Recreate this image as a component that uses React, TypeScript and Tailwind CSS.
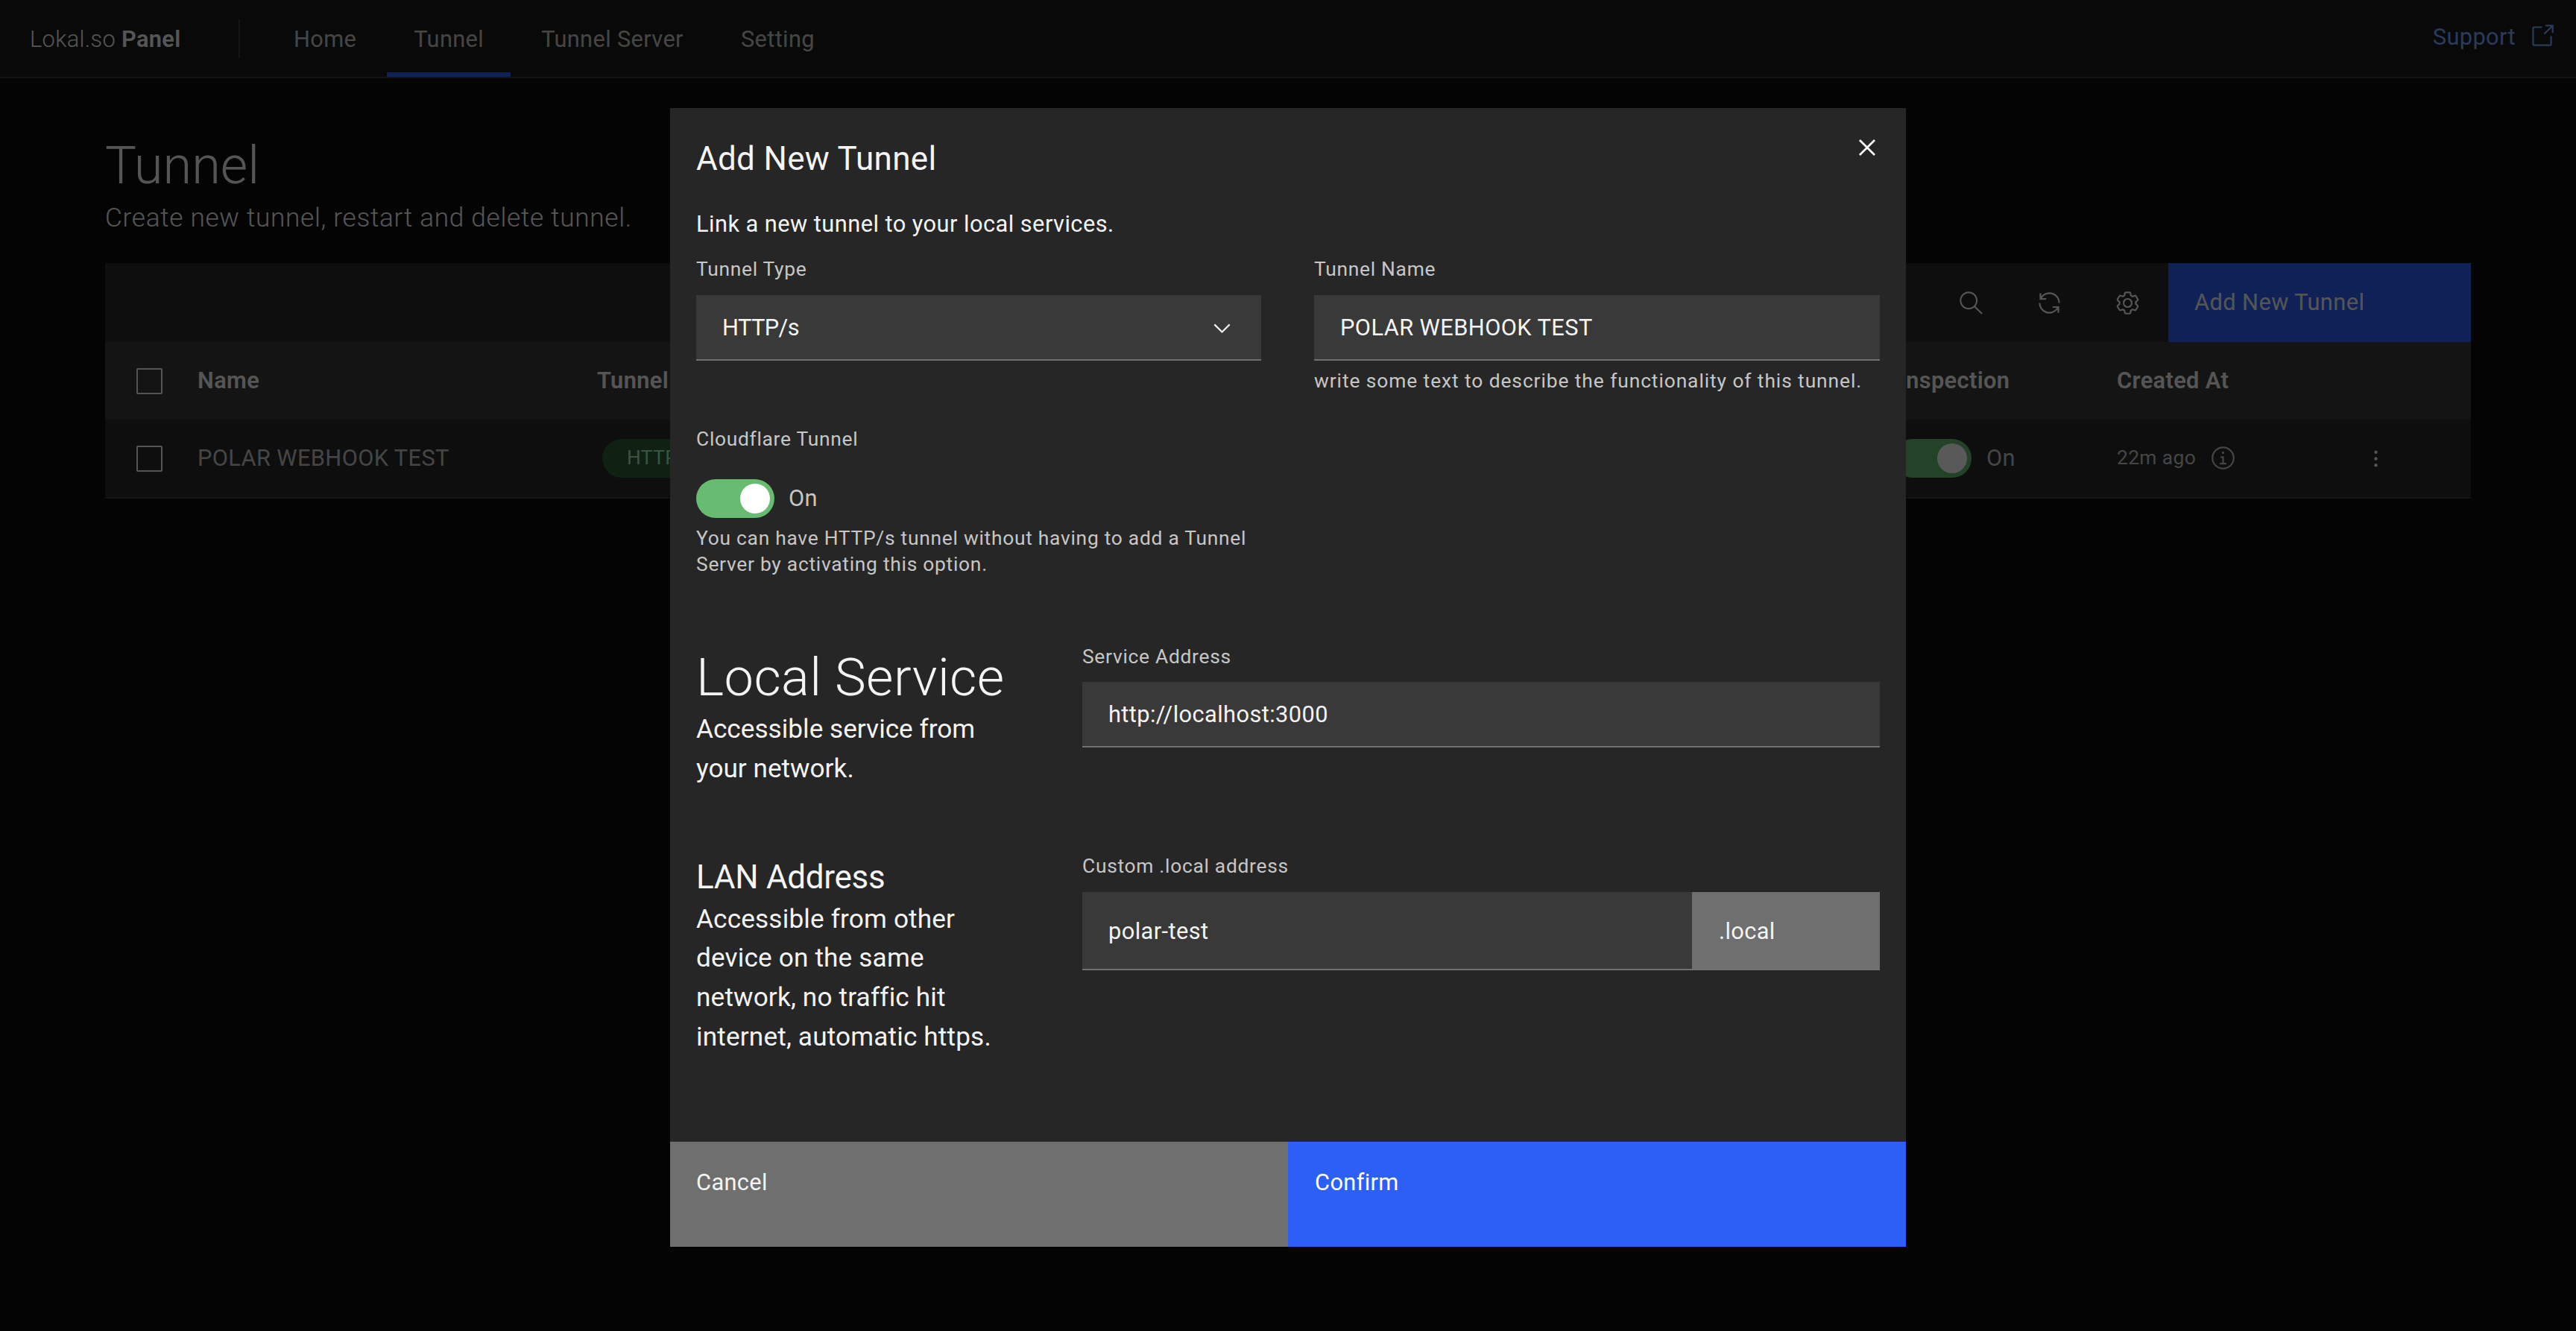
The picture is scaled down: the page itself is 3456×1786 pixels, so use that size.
import React from "react";

const Search = () => (
  <svg viewBox="0 0 16 16" className="w-[35px] h-[35px]" fill="currentColor">
    <path d="M15,14.3L10.7,10c1.9-2.3,1.6-5.8-0.7-7.7S4.2,0.7,2.3,3S0.7,8.8,3,10.7c2,1.7,5,1.7,7,0l4.3,4.3L15,14.3z M2,6.5 C2,4,4,2,6.5,2S11,4,11,6.5S9,11,6.5,11S2,9,2,6.5z" />
  </svg>
);
const Renew = () => (
  <svg viewBox="0 0 32 32" className="w-[35px] h-[35px]" fill="currentColor">
    <path d="M12 10H6.78A11 11 0 0 1 27 16h2A13 13 0 0 0 6 7.68V4H4v8h8zM20 22h5.22A11 11 0 0 1 5 16H3a13 13 0 0 0 23 8.32V28h2v-8h-8z" />
  </svg>
);
const Gear = () => (
  <svg viewBox="0 0 32 32" className="w-[35px] h-[35px]" fill="currentColor">
    <path d="M27,16.76c0-.25,0-.5,0-.76s0-.51,0-.77l1.92-1.68A2,2,0,0,0,29.3,11L26.94,7a2,2,0,0,0-1.73-1,2,2,0,0,0-.64.1l-2.43.82a11.35,11.35,0,0,0-1.31-.75l-.51-2.52a2,2,0,0,0-2-1.61H13.64a2,2,0,0,0-2,1.61l-.51,2.52a11.48,11.48,0,0,0-1.32.75L7.43,6.06A2,2,0,0,0,6.79,6,2,2,0,0,0,5.06,7L2.7,11a2,2,0,0,0,.41,2.51L5,15.24c0,.25,0,.5,0,.76s0,.51,0,.77L3.11,18.45A2,2,0,0,0,2.7,21L5.06,25a2,2,0,0,0,1.73,1,2,2,0,0,0,.64-.1l2.43-.82a11.35,11.35,0,0,0,1.31.75l.51,2.52a2,2,0,0,0,2,1.61h4.72a2,2,0,0,0,2-1.61l.51-2.52a11.48,11.48,0,0,0,1.32-.75l2.42.82a2,2,0,0,0,.64.1,2,2,0,0,0,1.73-1L29.3,21a2,2,0,0,0-.41-2.51ZM25.21,24l-3.43-1.16a8.86,8.86,0,0,1-2.71,1.57L18.36,28H13.64l-.71-3.55a9.36,9.36,0,0,1-2.7-1.57L6.79,24,4.43,20l2.72-2.4a8.9,8.9,0,0,1,0-3.13L4.43,12,6.79,8l3.43,1.16a8.86,8.86,0,0,1,2.71-1.57L13.64,4h4.72l.71,3.55a9.36,9.36,0,0,1,2.7,1.57L25.21,8,27.57,12l-2.72,2.4a8.9,8.9,0,0,1,0,3.13L27.57,20Z" />
    <path d="M16,22a6,6,0,1,1,6-6A5.94,5.94,0,0,1,16,22Zm0-10a3.91,3.91,0,0,0-4,4,3.91,3.91,0,0,0,4,4,3.91,3.91,0,0,0,4-4A3.91,3.91,0,0,0,16,12Z" />
  </svg>
);
const Launch = () => (
  <svg viewBox="0 0 16 16" className="w-[35px] h-[35px]" fill="currentColor">
    <path d="M13,14H3c-0.6,0-1-0.4-1-1V3c0-0.6,0.4-1,1-1h5v1H3v10h10V8h1v5C14,13.6,13.6,14,13,14z" />
    <path d="M10 1L10 2 13.3 2 9 6.3 9.7 7 14 2.7 14 6 15 6 15 1z" />
  </svg>
);
const Info = () => (
  <svg viewBox="0 0 32 32" className="w-[35px] h-[35px]" fill="currentColor">
    <path d="M17 22L17 14 13 14 13 16 15 16 15 22 12 22 12 24 20 24 20 22 17 22zM16 8a1.5 1.5 0 1 0 1.5 1.5A1.5 1.5 0 0 0 16 8z" />
    <path d="M16,30A14,14,0,1,1,30,16,14,14,0,0,1,16,30ZM16,4A12,12,0,1,0,28,16,12,12,0,0,0,16,4Z" />
  </svg>
);
const Kebab = () => (
  <svg viewBox="0 0 32 32" className="w-[35px] h-[35px]" fill="currentColor">
    <circle cx="16" cy="8" r="2" />
    <circle cx="16" cy="16" r="2" />
    <circle cx="16" cy="24" r="2" />
  </svg>
);
const Close = () => (
  <svg viewBox="0 0 32 32" className="w-[44px] h-[44px]" fill="currentColor">
    <path d="M24 9.4L22.6 8 16 14.6 9.4 8 8 9.4 14.6 16 8 22.6 9.4 24 16 17.4 22.6 24 24 22.6 17.4 16 24 9.4z" />
  </svg>
);
const Chevron = () => (
  <svg viewBox="0 0 16 16" className="w-[35px] h-[35px]" fill="currentColor">
    <path d="M8 11L3 6 3.7 5.3 8 9.6 12.3 5.3 13 6z" />
  </svg>
);

const Checkbox = () => <div className="w-[35px] h-[35px] rounded-[2px] border-2 border-[#f4f4f4]" />;

const Label = ({ children }: { children: React.ReactNode }) => (
  <div className="text-[26.4px] leading-[30px] tracking-[0.7px] text-[#c6c6c6]">{children}</div>
);

const Field = ({ value, h = "h-[88px]", pt = "pt-[2px]" }: { value: string; h?: string; pt?: string }) => (
  <div className={`${h} ${pt} flex items-center px-[35px] bg-[#393939] border-b-2 border-[#6f6f6f] text-[30.8px] tracking-[0.4px] text-[#f4f4f4]`}>
    {value}
  </div>
);

const Toggle = () => (
  <div className="relative w-[105px] h-[52px] rounded-full bg-[#67bc72]">
    <div className="absolute right-[6px] top-[6px] w-[40px] h-[40px] rounded-full bg-white" />
  </div>
);

const Page = () => (
  <div className="min-h-[1786px] bg-[#0e0e0e] text-[#f4f4f4]">
    <header className="h-[105px] flex items-stretch bg-[#1a1a1a] border-b-2 border-[#393939]">
      <div className="flex items-center pl-[40px] pt-[3px] w-[320px] text-[30.8px] font-light tracking-[0.35px]">
        Lokal.so&nbsp;<span className="font-semibold">Panel</span>
      </div>
      <div className="w-[2px] h-[52px] mt-[26px] bg-[#393939]" />
      <nav className="flex gap-[5px] ml-[36px] text-[30.8px] tracking-[0.35px] text-[#c6c6c6]">
        <div className="px-[36px] pt-[4px] flex items-center">Home</div>
        <div className="px-[36px] pt-[10px] flex items-center border-b-[6px] border-[#2c5ff6]">Tunnel</div>
        <div className="px-[36px] pt-[4px] flex items-center">Tunnel Server</div>
        <div className="px-[36px] pt-[4px] flex items-center">Setting</div>
      </nav>
      <div className="ml-auto flex items-center gap-[18px] pr-[28px] pb-[6px] text-[30.8px] tracking-[0.35px] text-[#78a9ff]">
        <span className="mt-[4px]">Support</span>
        <Launch />
      </div>
    </header>
    <main className="px-[141px] pt-[72px]">
      <h1 className="text-[70.4px] leading-[90px] font-light">Tunnel</h1>
      <p className="mt-[2px] text-[35.2px] leading-[46px] font-light tracking-[0.7px] text-[#f4f4f4]">Create new tunnel, restart and delete tunnel.</p>
      <div className="mt-[38px] bg-[#282828]">
        <div className="h-[106px] flex items-center justify-end">
          <div className="flex items-center gap-[70px] pr-[37px] text-[#f4f4f4]">
            <Search />
            <Renew />
            <Gear />
          </div>
          <div className="w-[406px] h-full flex items-center pl-[35px] bg-[#2c5ff6] text-[30.8px] tracking-[0.4px]">Add New Tunnel</div>
        </div>
        <div className="h-[104px] grid grid-cols-[124px_536px_1739px_300px_330px_1fr] items-center bg-[#393939] text-[30.8px] font-semibold tracking-[0.35px]">
          <div className="pl-[42px]"><Checkbox /></div>
          <div>Name</div>
          <div>Tunnel Type</div>
          <div className="pl-[8px]">Inspection</div>
          <div>Created At</div>
          <div />
        </div>
        <div className="h-[106px] grid grid-cols-[124px_536px_1739px_300px_330px_1fr] items-center border-b-2 border-[#393939] text-[30.8px] tracking-[0.35px]">
          <div className="pl-[42px]"><Checkbox /></div>
          <div className="text-[#c6c6c6]">POLAR WEBHOOK TEST</div>
          <div className="pl-[7px]">
            <span className="inline-flex h-[52px] items-center px-[33px] rounded-full bg-[#2f5c38] text-[#a7f0ba] text-[26.4px]">HTTP/s</span>
          </div>
          <div className="flex items-center gap-[20px]">
            <Toggle />
            <span className="text-[#c6c6c6]">On</span>
          </div>
          <div className="flex items-center gap-[19px] text-[26.4px] text-[#c6c6c6]">
            22m ago
            <Info />
          </div>
          <div className="text-[#f4f4f4]"><Kebab /></div>
        </div>
      </div>
    </main>
  </div>
);

const Modal = () => (
  <div className="fixed inset-0 bg-black/65 flex justify-center items-start pt-[145px]">
    <div className="relative w-[1658px] h-[1528px] flex flex-col bg-[#262626] text-[#f4f4f4]">
      <button className="absolute right-[30px] top-[31px] text-white"><Close /></button>
      <div className="px-[35px] flex-1">
        <h2 className="mt-[40px] text-[44px] leading-[56px] tracking-[0.3px]">Add New Tunnel</h2>
        <p className="mt-[38px] text-[30.8px] leading-[44px] tracking-[0.45px]">Link a new tunnel to your local services.</p>
        <div className="mt-[23px] grid grid-cols-[758px_759px] gap-x-[71px]">
          <div>
            <Label>Tunnel Type</Label>
            <div className="mt-[20px] h-[88px] pt-[2px] flex items-center justify-between pl-[35px] pr-[35px] bg-[#393939] border-b-2 border-[#6f6f6f] text-[30.8px]">
              <span className="tracking-[-0.6px]">HTTP/s</span>
              <Chevron />
            </div>
          </div>
          <div>
            <Label>Tunnel Name</Label>
            <div className="mt-[20px]"><Field value="POLAR WEBHOOK TEST" /></div>
            <div className="mt-[10px] text-[26.4px] leading-[35px] tracking-[0.9px] text-[#c6c6c6]">write some text to describe the functionality of this tunnel.</div>
          </div>
        </div>
        <div className="mt-[45px]"><Label>Cloudflare Tunnel</Label></div>
        <div className="mt-[39px] flex items-center gap-[19px]">
          <Toggle />
          <span className="text-[30.8px] tracking-[0.35px] text-[#c6c6c6]">On</span>
        </div>
        <div className="mt-[10px] w-[758px] text-[26.4px] leading-[35px] tracking-[0.72px] text-[#c6c6c6]">
          You can have HTTP/s tunnel without having to add a Tunnel Server by activating this option.
        </div>
        <div className="mt-[91px] flex">
          <div className="w-[518px] pt-[3px]">
            <h3 className="text-[70.4px] leading-[80px] font-light tracking-[0.4px]">Local Service</h3>
            <p className="mt-[3px] text-[35.2px] leading-[52.8px]">Accessible service from<br />your network.</p>
          </div>
          <div className="flex-1">
            <Label>Service Address</Label>
            <div className="mt-[19px]"><Field value="http://localhost:3000" /></div>
          </div>
        </div>
        <div className="mt-[89px] flex">
          <div className="w-[518px]">
            <h3 className="pt-[2px] text-[44px] leading-[56px] tracking-[-0.3px]">LAN Address</h3>
            <p className="mt-[2px] text-[35.2px] leading-[52.8px] tracking-[0.15px]">Accessible from other<br />device on the same<br />network, no traffic hit<br />internet, automatic https.</p>
          </div>
          <div className="flex-1">
            <Label>Custom .local address</Label>
            <div className="mt-[20px] flex h-[105px]">
              <div className="flex-1"><Field value="polar-test" h="h-[105px]" pt="pt-[4px]" /></div>
              <div className="w-[252px] pt-[2px] flex items-center pl-[36px] bg-[#6f6f6f] text-[30.8px] tracking-[0.35px]">.local</div>
            </div>
          </div>
        </div>
      </div>
      <div className="h-[141px] grid grid-cols-[829px_829px] text-[30.8px] leading-[44px] tracking-[0.35px]">
        <div className="bg-[#6f6f6f] pl-[35px] pt-[33px]">Cancel</div>
        <div className="bg-[#2c5ff6] pl-[36px] pt-[33px] text-white">Confirm</div>
      </div>
    </div>
  </div>
);

export default function App() {
  return (
    <div className="font-['Roboto',sans-serif]">
      <Page />
      <Modal />
    </div>
  );
}
